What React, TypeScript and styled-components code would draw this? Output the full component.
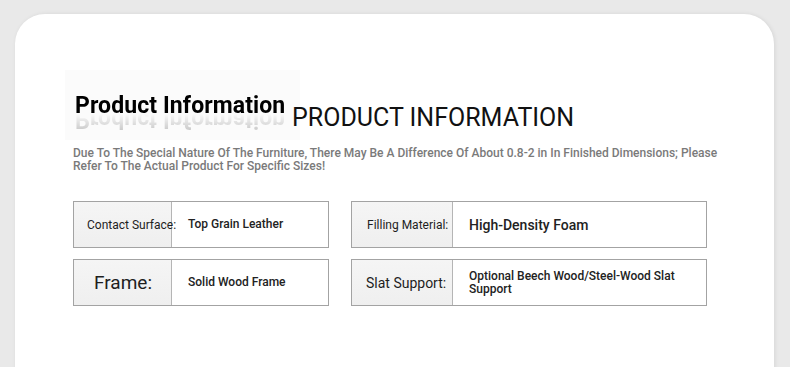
import React from "react";
import styled, { createGlobalStyle } from "styled-components";

const Global = createGlobalStyle`
  html, body { margin: 0; padding: 0; background: #e9e9e9; }
  body { font-family: Roboto, "Liberation Sans", Arial, sans-serif; overflow: hidden; }
`;

const Page = styled.div`
  width: 790px;
  height: 367px;
  padding: 14px 0 0 15px;
  box-sizing: border-box;
  overflow: hidden;
`;

const Card = styled.div`
  width: 759px;
  height: 420px;
  background: #ffffff;
  border-radius: 30px 30px 0 0;
  box-shadow: 1px 0 4px rgba(0, 0, 0, 0.08);
  padding: 56px 0 0 50px;
  box-sizing: border-box;
`;

const HeadRow = styled.div`
  display: flex;
  align-items: flex-start;
`;

const HeadBox = styled.div`
  width: 235px;
  height: 70px;
  background: #fbfbfb;
  display: flex;
  align-items: flex-start;
`;

const Title = styled.div`
  margin: 24px 0 0 10px;
  font-size: 23px;
  line-height: 23px;
  font-weight: 700;
  letter-spacing: 0.1px;
  color: #000;
  white-space: nowrap;
  -webkit-box-reflect: below -9px linear-gradient(to bottom, rgba(0, 0, 0, 0.2) 0%, rgba(0, 0, 0, 0.08) 45%, transparent 75%);
`;

const SubTitle = styled.div`
  margin: 35px 0 0 -8px;
  font-size: 25px;
  line-height: 26px;
  font-weight: 400;
  letter-spacing: 0;
  color: #111;
  white-space: nowrap;
`;

const Note = styled.div`
  margin: 7px 0 0 8px;
  width: 660px;
  font-size: 12px;
  line-height: 13px;
  font-weight: 500;
  color: #7a7a7a;
`;

const Grid = styled.div`
  margin: 28px 0 0 8px;
  display: grid;
  grid-template-columns: 256px 356px;
  column-gap: 22px;
  row-gap: 11px;
`;

const Box = styled.div`
  height: 47px;
  border: 1px solid #a3a3a3;
  box-sizing: border-box;
  display: flex;
`;

const Label = styled.div<{ $w: number; $pad: number; $size: number }>`
  width: ${(p) => p.$w}px;
  flex: none;
  box-sizing: border-box;
  padding-left: ${(p) => p.$pad}px;
  display: flex;
  align-items: center;
  background: linear-gradient(180deg, #f5f5f5 0%, #efefef 100%);
  border-right: 1px solid #b5b5b5;
  font-size: ${(p) => p.$size}px;
  font-weight: 400;
  color: #1e1e1e;
  white-space: nowrap;
  position: relative;
  z-index: 1;
`;

const Value = styled.div<{ $size: number }>`
  flex: 1;
  padding: 0 20px 0 16px;
  display: flex;
  align-items: center;
  font-size: ${(p) => p.$size}px;
  line-height: ${(p) => (p.$size > 12 ? 16 : 13)}px;
  font-weight: 500;
  color: #222;
`;

type Row = { label: string; value: string; w: number; pad: number; ls: number; vs: number };

const rows: Row[] = [
  { label: "Contact Surface:", value: "Top Grain Leather", w: 98, pad: 13, ls: 12, vs: 12 },
  { label: "Filling Material:", value: "High-Density Foam", w: 101, pad: 15, ls: 12, vs: 14 },
  { label: "Frame:", value: "Solid Wood Frame", w: 98, pad: 20, ls: 19, vs: 12 },
  { label: "Slat Support:", value: "Optional Beech Wood/Steel-Wood Slat Support", w: 101, pad: 14, ls: 14, vs: 12 },
];

export default function App() {
  return (
    <>
      <Global />
      <Page>
        <Card>
          <HeadRow>
            <HeadBox>
              <Title>Product Information</Title>
            </HeadBox>
            <SubTitle>PRODUCT INFORMATION</SubTitle>
          </HeadRow>
          <Note>
            Due To The Special Nature Of The Furniture, There May Be A Difference Of About 0.8-2 in In
            Finished Dimensions; Please Refer To The Actual Product For Specific Sizes!
          </Note>
          <Grid>
            {rows.map((r) => (
              <Box key={r.label}>
                <Label $w={r.w} $pad={r.pad} $size={r.ls}>
                  {r.label}
                </Label>
                <Value $size={r.vs}>{r.value}</Value>
              </Box>
            ))}
          </Grid>
        </Card>
      </Page>
    </>
  );
}
